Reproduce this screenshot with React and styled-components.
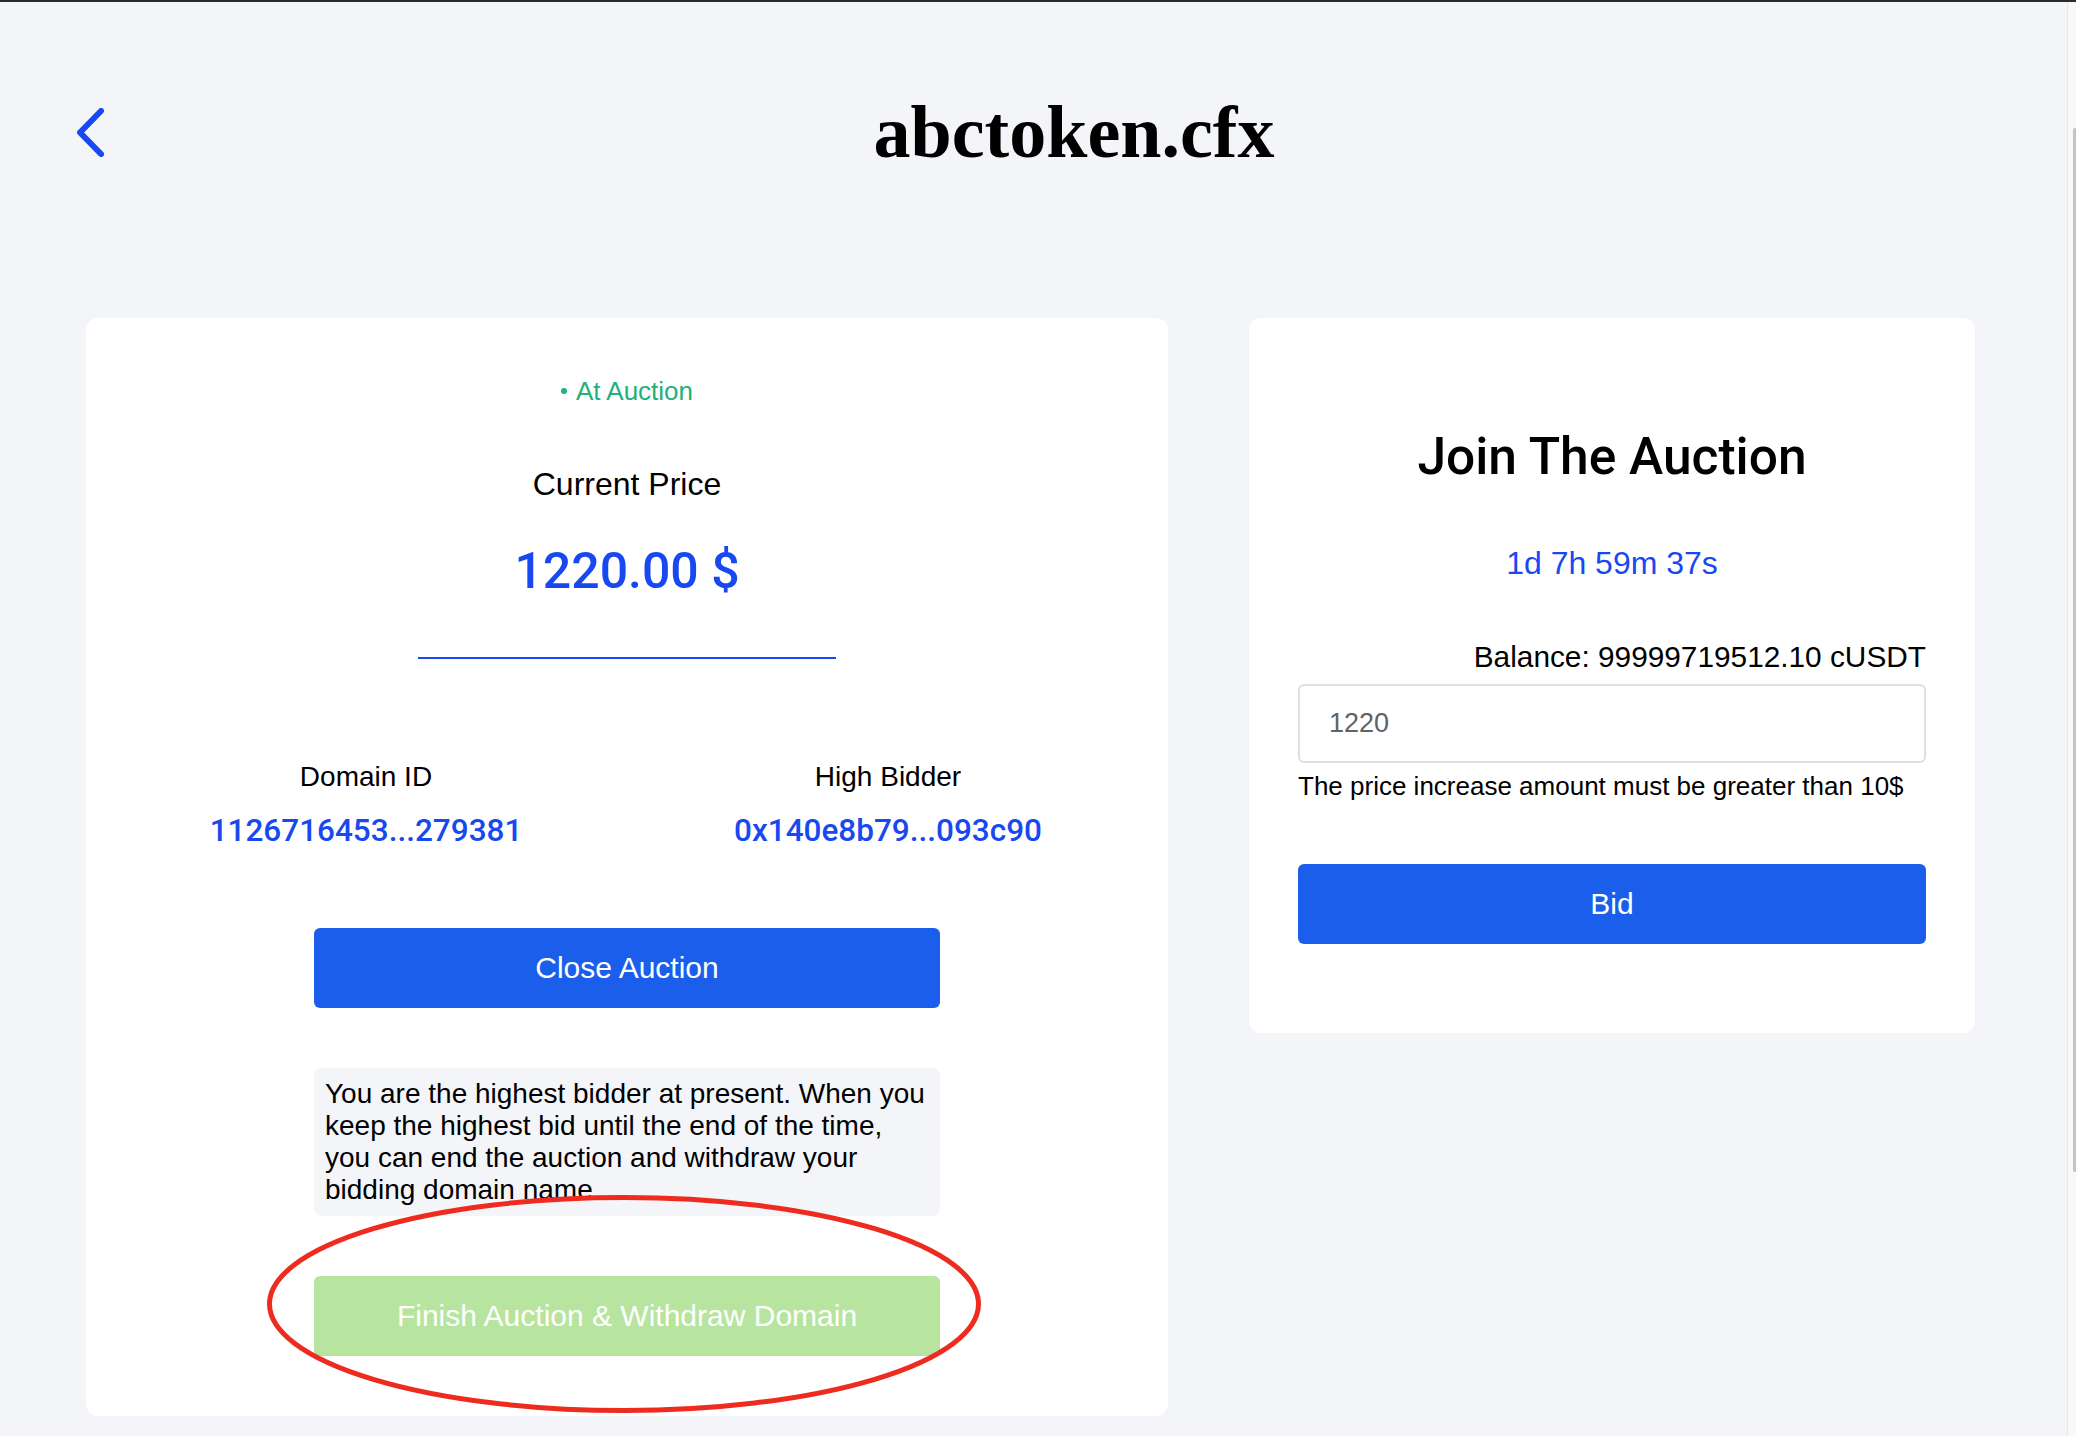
import React from "react";
import styled, { createGlobalStyle } from "styled-components";

const Global = createGlobalStyle`
  html, body { margin: 0; padding: 0; background: #f4f5f9; }
  body { font-family: "Liberation Sans", Arial, sans-serif; color: #000; }
  * { box-sizing: border-box; }
`;

const BLUE = "#1848ef";
const BTN_BLUE = "#1b5eec";

const Page = styled.div`
  min-height: 100vh;
  display: flex;
  flex-direction: column;
`;

const TopBar = styled.div`
  height: 2px;
  background: #2b2b2b;
`;

const Body = styled.div`
  flex: 1;
  display: flex;
`;

const Main = styled.main`
  flex: 1;
  padding-top: 85px;
`;

const ScrollTrack = styled.div`
  width: 9px;
  background: #f8f8f8;
  border-left: 1px solid #e6e6e6;
  display: flex;
  flex-direction: column;
  align-items: flex-end;
`;

const ScrollThumb = styled.div`
  margin-top: 126px;
  width: 3px;
  height: 1044px;
  background: #c4c4c4;
  border-radius: 2px 0 0 2px;
`;

const Header = styled.header`
  height: 90px;
  display: flex;
  align-items: center;
  padding: 0 23px 0 77px;
`;

const BackButton = styled.button`
  border: none;
  background: none;
  padding: 0;
  width: 27px;
  height: 49px;
  display: flex;
  cursor: pointer;
`;

const Title = styled.h1`
  flex: 1;
  margin: 0;
  text-align: center;
  font-family: "Liberation Serif", "Times New Roman", serif;
  font-weight: 700;
  font-size: 74px;
  line-height: 90px;
  color: #000;
`;

const Cards = styled.div`
  margin-top: 141px;
  padding-left: 86px;
  display: grid;
  grid-template-columns: 1082px 726px;
  column-gap: 81px;
  align-items: start;
`;

const Card = styled.section`
  position: relative;
  background: #fff;
  border-radius: 12px;
  display: flex;
  flex-direction: column;
`;

const AuctionCard = styled(Card)`
  padding: 58px 19px 60px;
  align-items: center;
`;

const BidCard = styled(Card)`
  padding: 109px 49px 89px;
`;

const Status = styled.div`
  display: flex;
  align-items: center;
  font-size: 26px;
  line-height: 30px;
  color: #21b07e;
`;

const Dot = styled.span`
  width: 6px;
  height: 6px;
  border-radius: 50%;
  background: #21b07e;
  margin-right: 9px;
  margin-top: -1px;
`;

const Label = styled.div`
  margin-top: ${(p) => p.$mt || 0}px;
  font-size: ${(p) => p.$size || 28}px;
  line-height: ${(p) => p.$lh || 34}px;
  color: #000;
`;

const Price = styled.div`
  margin-top: 37px;
  font-family: Roboto, "Liberation Sans", sans-serif;
  font-weight: 500;
  font-size: 50px;
  line-height: 60px;
  color: ${BLUE};
`;

const Divider = styled.div`
  margin-top: 56px;
  width: 418px;
  height: 2px;
  background: ${BLUE};
`;

const Details = styled.div`
  margin-top: 101px;
  width: 100%;
  display: grid;
  grid-template-columns: 1fr 1fr;
`;

const Detail = styled.div`
  display: flex;
  flex-direction: column;
  align-items: center;
`;

const DetailValue = styled.div`
  margin-top: 17px;
  font-family: Roboto, "Liberation Sans", sans-serif;
  font-weight: 500;
  font-size: 31.5px;
  line-height: 40px;
  color: ${BLUE};
`;

const Button = styled.button`
  margin-top: ${(p) => p.$mt || 0}px;
  width: ${(p) => (p.$full ? "100%" : "626px")};
  height: 80px;
  border: none;
  border-radius: 6px;
  background: ${(p) => (p.$variant === "success" ? "#b7e59f" : BTN_BLUE)};
  color: #fff;
  font-family: "Liberation Sans", Arial, sans-serif;
  font-size: 30px;
  cursor: ${(p) => (p.$variant === "success" ? "not-allowed" : "pointer")};
`;

const Notice = styled.div`
  margin-top: 60px;
  width: 626px;
  padding: 10px 9px 10px 11px;
  background: #f4f5f9;
  border-radius: 8px;
  font-size: 28px;
  line-height: 32px;
  color: #000;
`;

const Annotation = styled.svg`
  position: absolute;
  left: 181px;
  top: 877px;
  width: 714px;
  height: 218px;
  pointer-events: none;
  overflow: visible;
`;

const JoinTitle = styled.h2`
  margin: 0;
  text-align: center;
  font-family: Roboto, "Liberation Sans", sans-serif;
  font-weight: 500;
  font-size: 51.5px;
  line-height: 60px;
  color: #000;
`;

const Countdown = styled.div`
  margin-top: 58px;
  text-align: center;
  font-size: 32px;
  line-height: 36px;
  color: ${BLUE};
`;

const Balance = styled.div`
  margin-top: 58px;
  text-align: right;
  font-size: 29.8px;
  line-height: 36px;
`;

const AmountInput = styled.input`
  margin-top: 9px;
  width: 100%;
  height: 79px;
  border: 2px solid #dcdfe6;
  border-radius: 6px;
  padding: 0 29px;
  font-family: "Liberation Sans", Arial, sans-serif;
  font-size: 27px;
  color: #606266;
  background: #fff;
  outline: none;
`;

const Hint = styled.div`
  margin-top: 7px;
  font-size: 26px;
  line-height: 32px;
`;

export default function App() {
  return (
    <>
      <Global />
      <Page>
        <TopBar />
        <Body>
          <Main>
            <Header>
              <BackButton aria-label="Back">
                <svg width="27" height="49" viewBox="0 0 27 49" fill="none">
                  <path
                    d="M24 3 L3 24.5 L24 46"
                    stroke={BLUE}
                    strokeWidth="6"
                    strokeLinecap="round"
                    strokeLinejoin="round"
                  />
                </svg>
              </BackButton>
              <Title>abctoken.cfx</Title>
            </Header>
            <Cards>
              <AuctionCard>
                <Status>
                  <Dot />
                  At Auction
                </Status>
                <Label $mt={58} $size={32} $lh={40}>
                  Current Price
                </Label>
                <Price>1220.00 $</Price>
                <Divider />
                <Details>
                  <Detail>
                    <Label>Domain ID</Label>
                    <DetailValue>1126716453...279381</DetailValue>
                  </Detail>
                  <Detail>
                    <Label>High Bidder</Label>
                    <DetailValue>0x140e8b79...093c90</DetailValue>
                  </Detail>
                </Details>
                <Button $mt={77}>Close Auction</Button>
                <Notice>
                  You are the highest bidder at present. When you keep the
                  highest bid until the end of the time, you can end the
                  auction and withdraw your bidding domain name.
                </Notice>
                <Button $mt={60} $variant="success">
                  Finish Auction &amp; Withdraw Domain
                </Button>
                <Annotation viewBox="0 0 714 218">
                  <ellipse
                    cx="357"
                    cy="109"
                    rx="354.5"
                    ry="106.5"
                    fill="none"
                    stroke="#ee2b1f"
                    strokeWidth="5"
                  />
                </Annotation>
              </AuctionCard>
              <BidCard>
                <JoinTitle>Join The Auction</JoinTitle>
                <Countdown>1d 7h 59m 37s</Countdown>
                <Balance>Balance: 99999719512.10 cUSDT</Balance>
                <AmountInput type="text" defaultValue="1220" />
                <Hint>The price increase amount must be greater than 10$</Hint>
                <Button $mt={62} $full>
                  Bid
                </Button>
              </BidCard>
            </Cards>
          </Main>
          <ScrollTrack>
            <ScrollThumb />
          </ScrollTrack>
        </Body>
      </Page>
    </>
  );
}
